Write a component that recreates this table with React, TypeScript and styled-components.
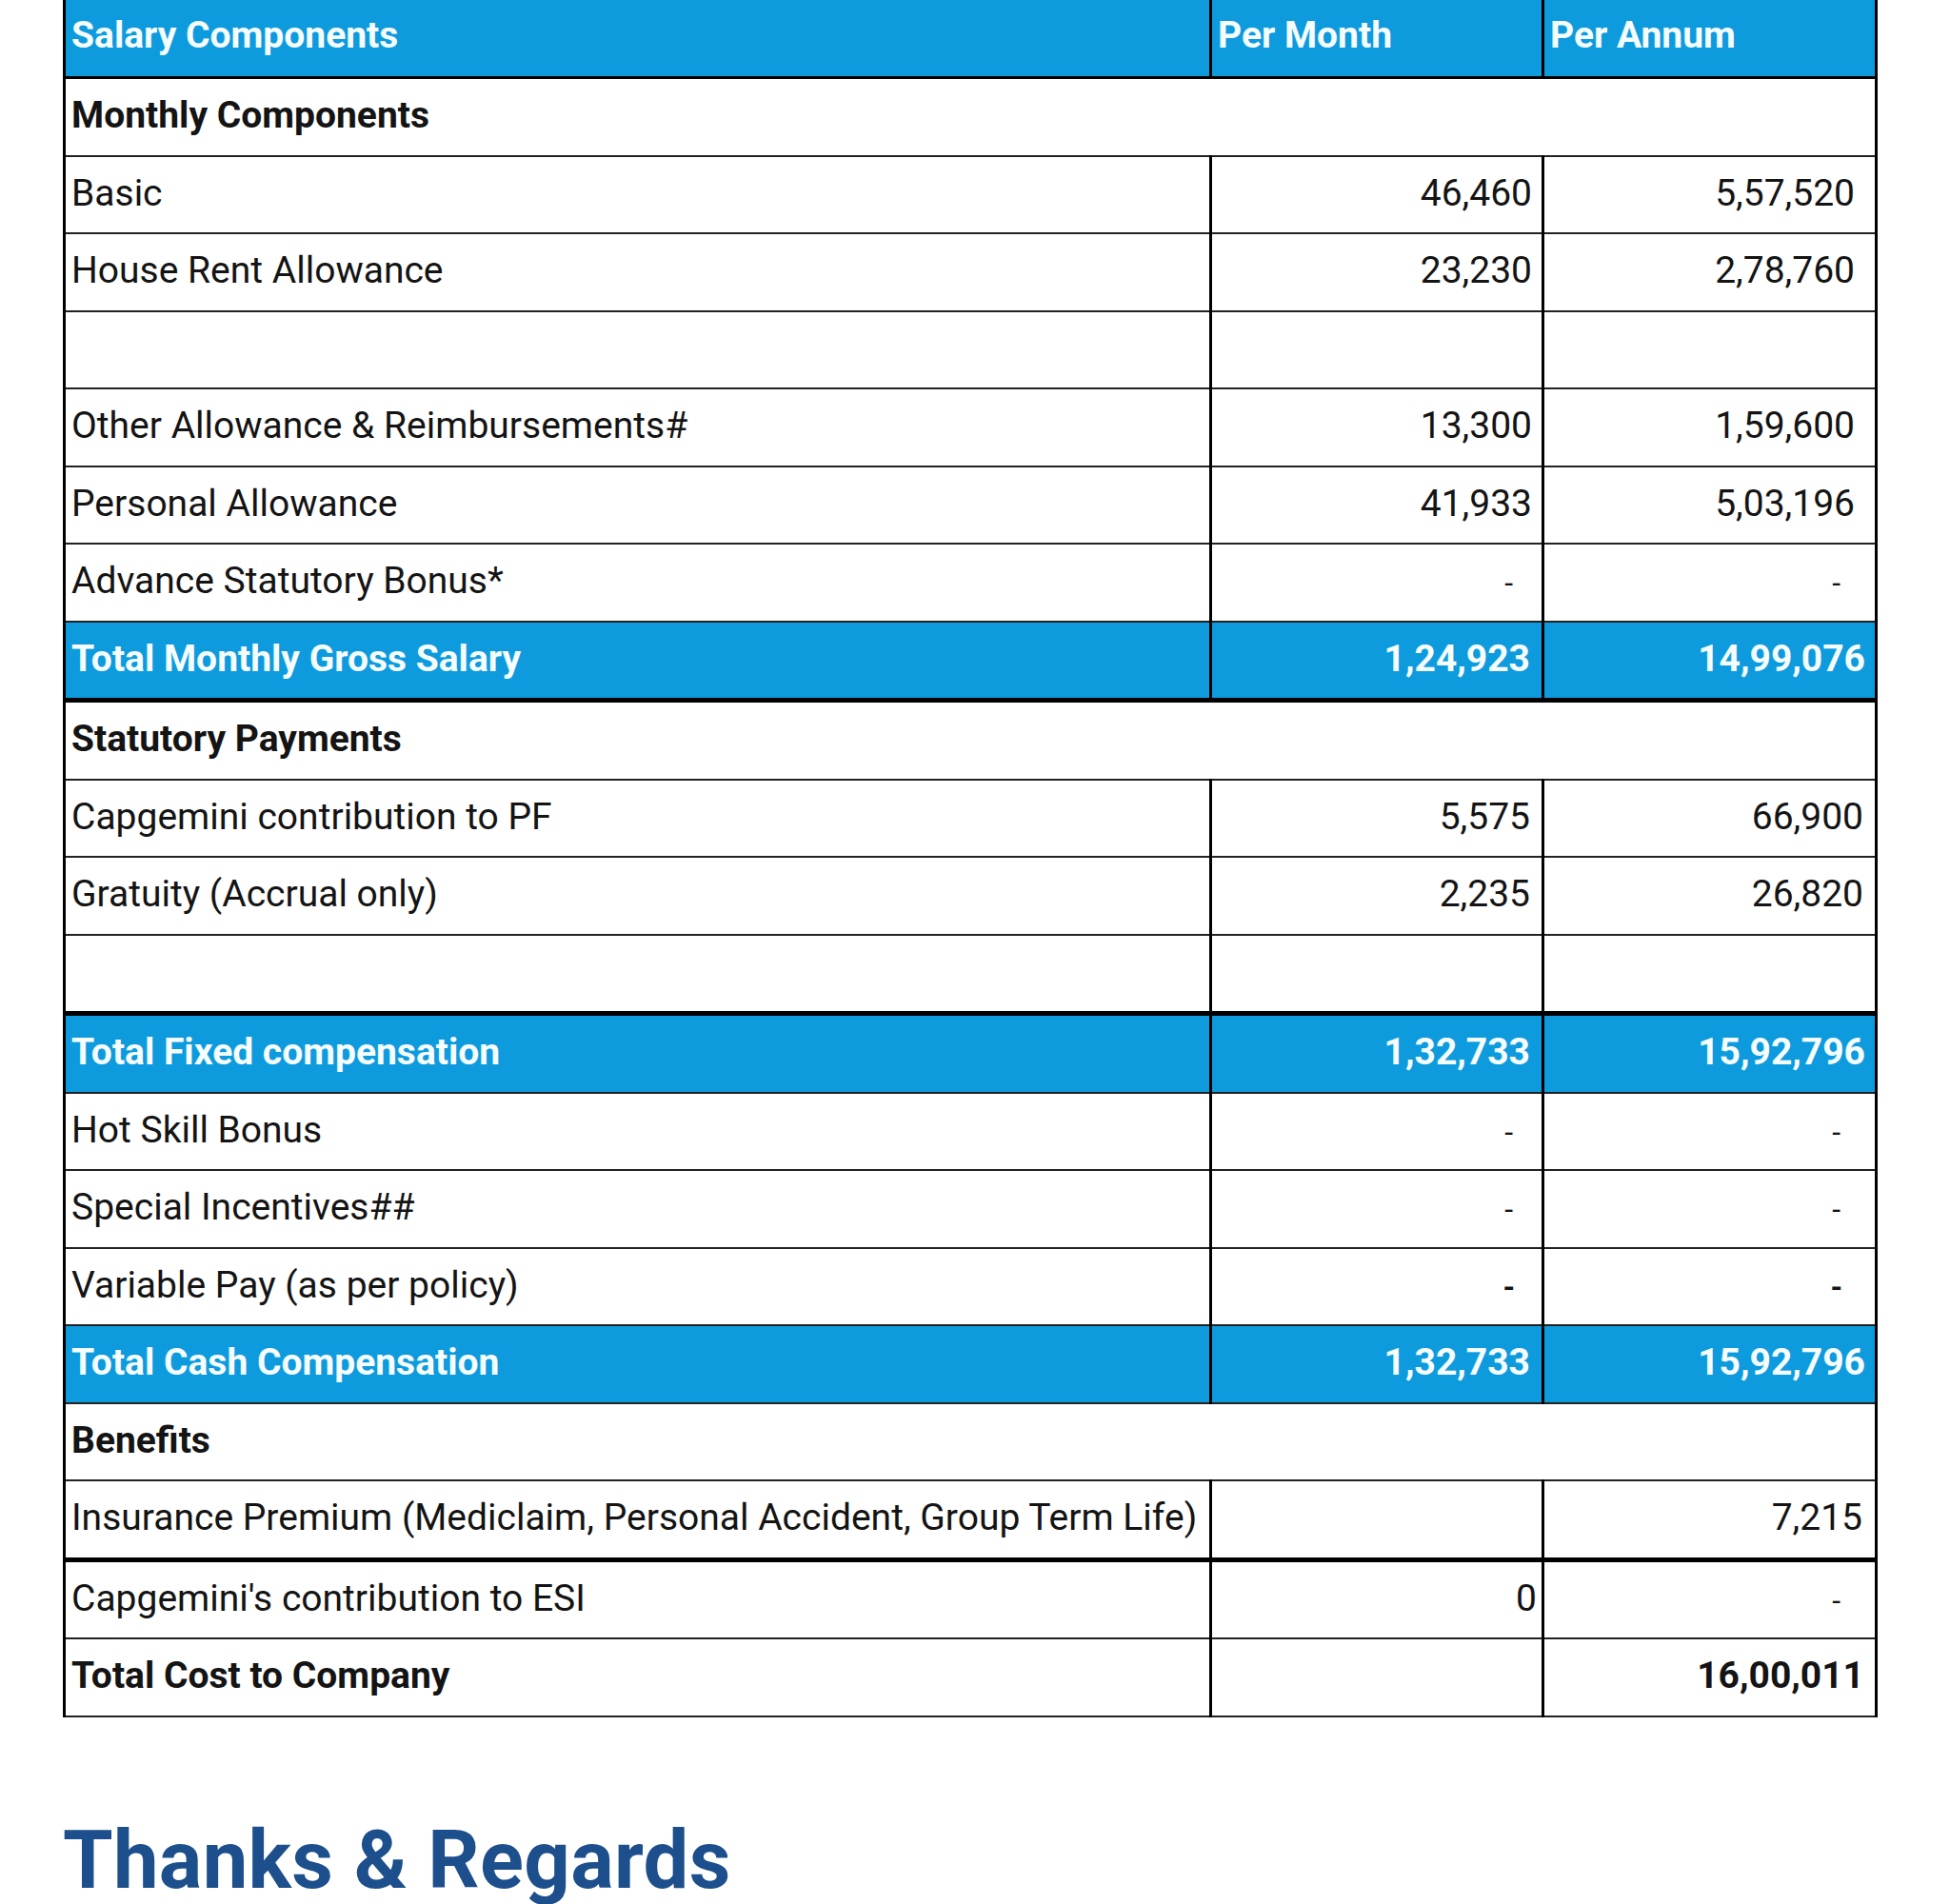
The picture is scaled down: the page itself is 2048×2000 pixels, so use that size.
import React from "react";
import styled, { createGlobalStyle, css } from "styled-components";

const GlobalStyle = createGlobalStyle`
  html, body {
    margin: 0;
    padding: 0;
    background: #ffffff;
  }
  body {
    font-family: Roboto, "Liberation Sans", Arial, sans-serif;
    color: #141414;
  }
`;

const Page = styled.div`
  width: 2048px;
  padding: 0 0 0 66px;
  box-sizing: border-box;
`;

const Table = styled.table`
  width: 1903px;
  table-layout: fixed;
  border-collapse: collapse;
  font-size: 39px;
  line-height: 1;
`;

type RowKind = "head" | "section" | "plain" | "total" | "grand";

const Row = styled.tr<{ $kind: RowKind; $thickBottom?: boolean }>`
  ${(p) =>
    (p.$kind === "head" || p.$kind === "total") &&
    css`
      background: #0e9bde;
      color: #f6fdff;
      font-weight: 700;
    `}
  ${(p) =>
    (p.$kind === "section" || p.$kind === "grand") &&
    css`
      font-weight: 700;
    `}
  ${(p) =>
    p.$thickBottom &&
    css`
      & > td {
        border-bottom-width: 5px;
        border-bottom-color: #000;
      }
    `}
`;

const Cell = styled.td<{ $align?: "left" | "right"; $pad?: number; $bold?: boolean }>`
  height: 77.5px;
  padding: 0 ${(p) => (p.$pad ?? 8)}px 2px ${(p) => (p.$align === "right" ? 0 : 6)}px;
  border: 3px solid #000;
  border-top-width: 2px;
  border-bottom-width: 2px;
  border-top-color: #222;
  border-bottom-color: #222;
  text-align: ${(p) => p.$align ?? "left"};
  vertical-align: middle;
  white-space: nowrap;
  overflow: visible;
  ${(p) => p.$bold && css`font-weight: 700;`}
`;

const HeadCell = styled(Cell)`
  height: 74px;
  padding-bottom: 6px;
  border-top: none;
  border-bottom: 3px solid #000;
`;

const Dash = styled.span`
  display: inline-block;
  font-size: 32px;
`;

const Thanks = styled.h2`
  margin: 100px 0 0 0;
  font-family: Roboto, "Liberation Sans", Arial, sans-serif;
  font-weight: 700;
  font-size: 85px;
  line-height: normal;
  color: #1d4f8c;
  letter-spacing: 0.3px;
`;

type Val = { v: string; pad: number; bold?: boolean };
type Line =
  | { kind: "section"; label: string }
  | { kind: "empty"; thick?: boolean }
  | { kind: "plain" | "total" | "grand"; label: string; m: Val; a: Val; thick?: boolean };

const dash = (pad: number, bold?: boolean): Val => ({ v: "-", pad, bold });

const lines: Line[] = [
  { kind: "section", label: "Monthly Components" },
  { kind: "plain", label: "Basic", m: { v: "46,460", pad: 10 }, a: { v: "5,57,520", pad: 21 } },
  { kind: "plain", label: "House Rent Allowance", m: { v: "23,230", pad: 10 }, a: { v: "2,78,760", pad: 21 } },
  { kind: "empty" },
  {
    kind: "plain",
    label: "Other Allowance & Reimbursements#",
    m: { v: "13,300", pad: 10 },
    a: { v: "1,59,600", pad: 21 },
  },
  { kind: "plain", label: "Personal Allowance", m: { v: "41,933", pad: 10 }, a: { v: "5,03,196", pad: 21 } },
  { kind: "plain", label: "Advance Statutory Bonus*", m: dash(30), a: dash(36) },
  {
    kind: "total",
    label: "Total Monthly Gross Salary",
    m: { v: "1,24,923", pad: 12 },
    a: { v: "14,99,076", pad: 10 },
    thick: true,
  },
  { kind: "section", label: "Statutory Payments" },
  { kind: "plain", label: "Capgemini contribution to PF", m: { v: "5,575", pad: 12 }, a: { v: "66,900", pad: 12 } },
  { kind: "plain", label: "Gratuity (Accrual only)", m: { v: "2,235", pad: 12 }, a: { v: "26,820", pad: 12 } },
  { kind: "empty", thick: true },
  {
    kind: "total",
    label: "Total Fixed compensation",
    m: { v: "1,32,733", pad: 12 },
    a: { v: "15,92,796", pad: 10 },
  },
  { kind: "plain", label: "Hot Skill Bonus", m: dash(30), a: dash(36) },
  { kind: "plain", label: "Special Incentives##", m: dash(30), a: dash(36) },
  { kind: "plain", label: "Variable Pay (as per policy)", m: dash(28, true), a: dash(34, true) },
  {
    kind: "total",
    label: "Total Cash Compensation",
    m: { v: "1,32,733", pad: 12 },
    a: { v: "15,92,796", pad: 10 },
  },
  { kind: "section", label: "Benefits" },
  {
    kind: "plain",
    label: "Insurance Premium (Mediclaim, Personal Accident, Group Term Life)",
    m: { v: "", pad: 10 },
    a: { v: "7,215", pad: 13 },
    thick: true,
  },
  { kind: "plain", label: "Capgemini's contribution to ESI", m: { v: "0", pad: 5 }, a: dash(36) },
  { kind: "grand", label: "Total Cost to Company", m: { v: "", pad: 10 }, a: { v: "16,00,011", pad: 11 } },
];

const ValueCell: React.FC<{ val: Val }> = ({ val }) => (
  <Cell $align="right" $pad={val.pad} $bold={val.bold}>
    {val.v === "-" ? <Dash>-</Dash> : val.v}
  </Cell>
);

export default function App() {
  return (
    <Page>
      <GlobalStyle />
      <Table>
        <colgroup>
          <col style={{ width: 1204 }} />
          <col style={{ width: 349 }} />
          <col style={{ width: 350 }} />
        </colgroup>
        <tbody>
          <Row $kind="head">
            <HeadCell>Salary Components</HeadCell>
            <HeadCell>Per Month</HeadCell>
            <HeadCell>Per Annum</HeadCell>
          </Row>
          {lines.map((l, i) => {
            if (l.kind === "section") {
              return (
                <Row key={i} $kind="section">
                  <Cell colSpan={3}>{l.label}</Cell>
                </Row>
              );
            }
            if (l.kind === "empty") {
              return (
                <Row key={i} $kind="plain" $thickBottom={l.thick}>
                  <Cell />
                  <Cell />
                  <Cell />
                </Row>
              );
            }
            return (
              <Row key={i} $kind={l.kind} $thickBottom={l.thick}>
                <Cell>{l.label}</Cell>
                <ValueCell val={l.m} />
                <ValueCell val={l.a} />
              </Row>
            );
          })}
        </tbody>
      </Table>
      <Thanks>Thanks &amp; Regards</Thanks>
    </Page>
  );
}
